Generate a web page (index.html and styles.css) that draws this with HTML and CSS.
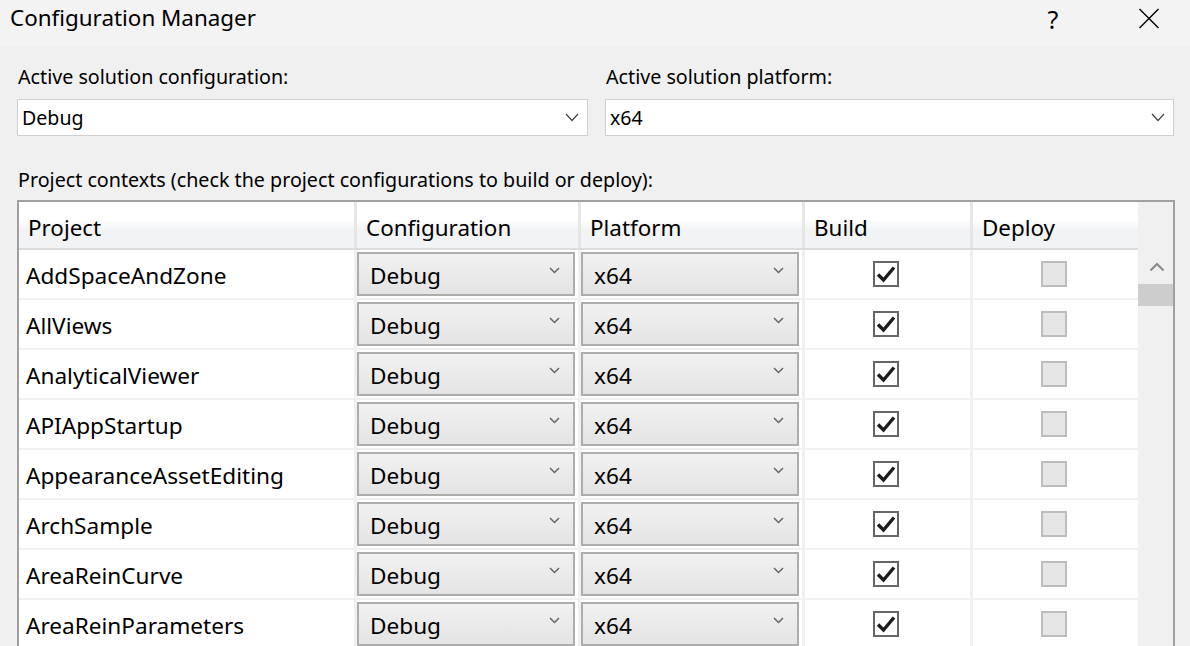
FILE: index.html
```html
<!DOCTYPE html>
<html>
<head>
<meta charset="utf-8">
<link rel="stylesheet" href="styles.css">
</head>
<body>
<div class="window">
  <div class="titlebar">
    <div class="title">Configuration Manager</div>
    <div class="tb-help">?</div>
    <div class="tb-close">
      <svg width="22" height="21" viewBox="0 0 22 21"><path d="M1.5 1 L20.5 20 M20.5 1 L1.5 20" stroke="#000" stroke-width="1.4" fill="none"/></svg>
    </div>
  </div>
  <div class="content">
    <div class="top-row">
      <div class="field">
        <div class="label">Active solution configuration:</div>
        <div class="combo"><span>Debug</span>
          <svg class="combo-chev" width="14" height="9" viewBox="0 0 14 9"><path d="M1 1 L7 7.5 L13 1" stroke="#444" stroke-width="1.2" fill="none"/></svg>
        </div>
      </div>
      <div class="field">
        <div class="label">Active solution platform:</div>
        <div class="combo"><span>x64</span>
          <svg class="combo-chev" width="14" height="9" viewBox="0 0 14 9"><path d="M1 1 L7 7.5 L13 1" stroke="#444" stroke-width="1.2" fill="none"/></svg>
        </div>
      </div>
    </div>
    <div class="label contexts">Project contexts (check the project configurations to build or deploy):</div>
    <div class="grid-frame">
      <div class="grid">
        <div class="hdr">
          <div class="hcell">Project</div>
          <div class="hcell">Configuration</div>
          <div class="hcell">Platform</div>
          <div class="hcell">Build</div>
          <div class="hcell">Deploy</div>
        </div>
        <div id="rows"></div>
      </div>
      <div class="vscroll">
        <svg class="sc-up" width="16" height="10" viewBox="0 0 16 10"><path d="M1.5 8.5 L8 2 L14.5 8.5" stroke="#8a8a8a" stroke-width="2" fill="none"/></svg>
        <div class="sc-thumb"></div>
      </div>
    </div>
  </div>
</div>
<template id="row-tpl">
  <div class="row">
    <div class="cell name"></div>
    <div class="cell"><div class="dd"><span>Debug</span><svg class="dd-chev" width="11" height="7" viewBox="0 0 11 7"><path d="M1 1 L5.5 5.5 L10 1" stroke="#666" stroke-width="1.5" fill="none"/></svg></div></div>
    <div class="cell"><div class="dd"><span>x64</span><svg class="dd-chev" width="11" height="7" viewBox="0 0 11 7"><path d="M1 1 L5.5 5.5 L10 1" stroke="#666" stroke-width="1.5" fill="none"/></svg></div></div>
    <div class="cell center"><div class="cb checked"><svg width="22" height="22" viewBox="0 0 22 22"><path d="M3 11.5 L8.5 17 L19 4.5" stroke="#1c1c1c" stroke-width="3.4" fill="none"/></svg></div></div>
    <div class="cell center"><div class="cb disabled"></div></div>
  </div>
</template>
<script src="script.js"></script>
</body>
</html>
```

FILE: script.js
```js
var names = ["AddSpaceAndZone","AllViews","AnalyticalViewer","APIAppStartup","AppearanceAssetEditing","ArchSample","AreaReinCurve","AreaReinParameters"];
var tpl = document.getElementById("row-tpl");
var rows = document.getElementById("rows");
names.forEach(function(n){
  var r = tpl.content.firstElementChild.cloneNode(true);
  r.querySelector(".name").textContent = n;
  rows.appendChild(r);
});
```

FILE: styles.css
```css
* { box-sizing: border-box; }
html, body { margin: 0; padding: 0; }
body {
  width: 1190px;
  height: 646px;
  overflow: hidden;
  background: #f0f0f0;
  font-family: "Noto Sans", "Open Sans", sans-serif;
  color: #000;
}
.window { width: 1190px; height: 646px; overflow: hidden; }
.titlebar {
  height: 46px;
  background: #f3f3f3;
  display: flex;
  align-items: center;
}
.title {
  font-size: 22.4px;
  padding-left: 10px;
  flex: 1;
  line-height: 1;
  margin-top: -10px;
}
.tb-help {
  font-size: 25px;
  width: 30px;
  text-align: center;
  margin-right: 70px;
  margin-top: -8px;
  line-height: 1;
}
.tb-close {
  width: 22px;
  height: 21px;
  margin-right: 30px;
  margin-top: -10px;
}
.tb-close svg { display: block; }
.content { padding: 0 15px 0 17px; }
.top-row {
  display: grid;
  grid-template-columns: 571px 569px;
  column-gap: 17px;
  padding-top: 17px;
}
.label {
  font-size: 19.7px;
  line-height: 28px;
  height: 28px;
  padding-left: 1px;
  white-space: nowrap;
}
.combo {
  margin-top: 8px;
  height: 37px;
  background: #fff;
  border: 1px solid #cfcfcf;
  display: flex;
  align-items: center;
  font-size: 19.6px;
  padding-left: 4px;
  padding-right: 8px;
}
.combo span { flex: 1; }
.combo-chev { display: block; }
.contexts { margin-top: 30px; }
.grid-frame {
  margin-top: 6px;
  width: 1158px;
  height: 500px;
  border: 2px solid #a0a0a0;
  border-bottom: none;
  display: flex;
  background: #fff;
}
.grid { width: 1119px; }
.hdr, .row {
  display: grid;
  grid-template-columns: 335px 221px 221px 165px 165px;
  column-gap: 3px;
}
.hdr {
  height: 48px;
  background: #e6e6e6;
  border-bottom: 2px solid #dcdcdc;
}
.hcell {
  background: linear-gradient(#ffffff 0%, #ffffff 38%, #f2f3f5 62%, #f2f3f5 100%);
  font-size: 22.4px;
  display: flex;
  align-items: center;
  padding-left: 9px;
  padding-top: 4px;
}
.row {
  height: 50px;
  background: #f0f0f0;
  border-bottom: 2px solid #f0f0f0;
}
.cell {
  background: #fff;
  display: flex;
  align-items: center;
  font-size: 22.6px;
}
.cell.name { padding-left: 7px; padding-top: 2px; }
.cell.center { justify-content: center; }
.dd {
  width: 218px;
  height: 44px;
  border: 2px solid #adadad;
  background: linear-gradient(#f1f1f1, #e4e4e4);
  display: flex;
  align-items: center;
  padding-left: 11px;
  padding-right: 13px;
}
.dd span { flex: 1; padding-top: 2px; }
.dd-chev { display: block; margin-top: -8px; }
.cb {
  width: 26px;
  height: 26px;
  border: 2px solid #666;
  background: #fff;
  margin-left: -3px;
}
.cb svg { display: block; }
.cb.disabled {
  background: #e6e6e6;
  border-color: #bdbdbd;
}
.vscroll {
  width: 35px;
  background: #f0f0f0;
  display: flex;
  flex-direction: column;
  align-items: center;
}
.sc-up { display: block; margin-top: 60px; margin-left: 2px; }
.sc-thumb {
  margin-top: 12px;
  width: 35px;
  height: 22px;
  background: #cdcdcd;
}
```
